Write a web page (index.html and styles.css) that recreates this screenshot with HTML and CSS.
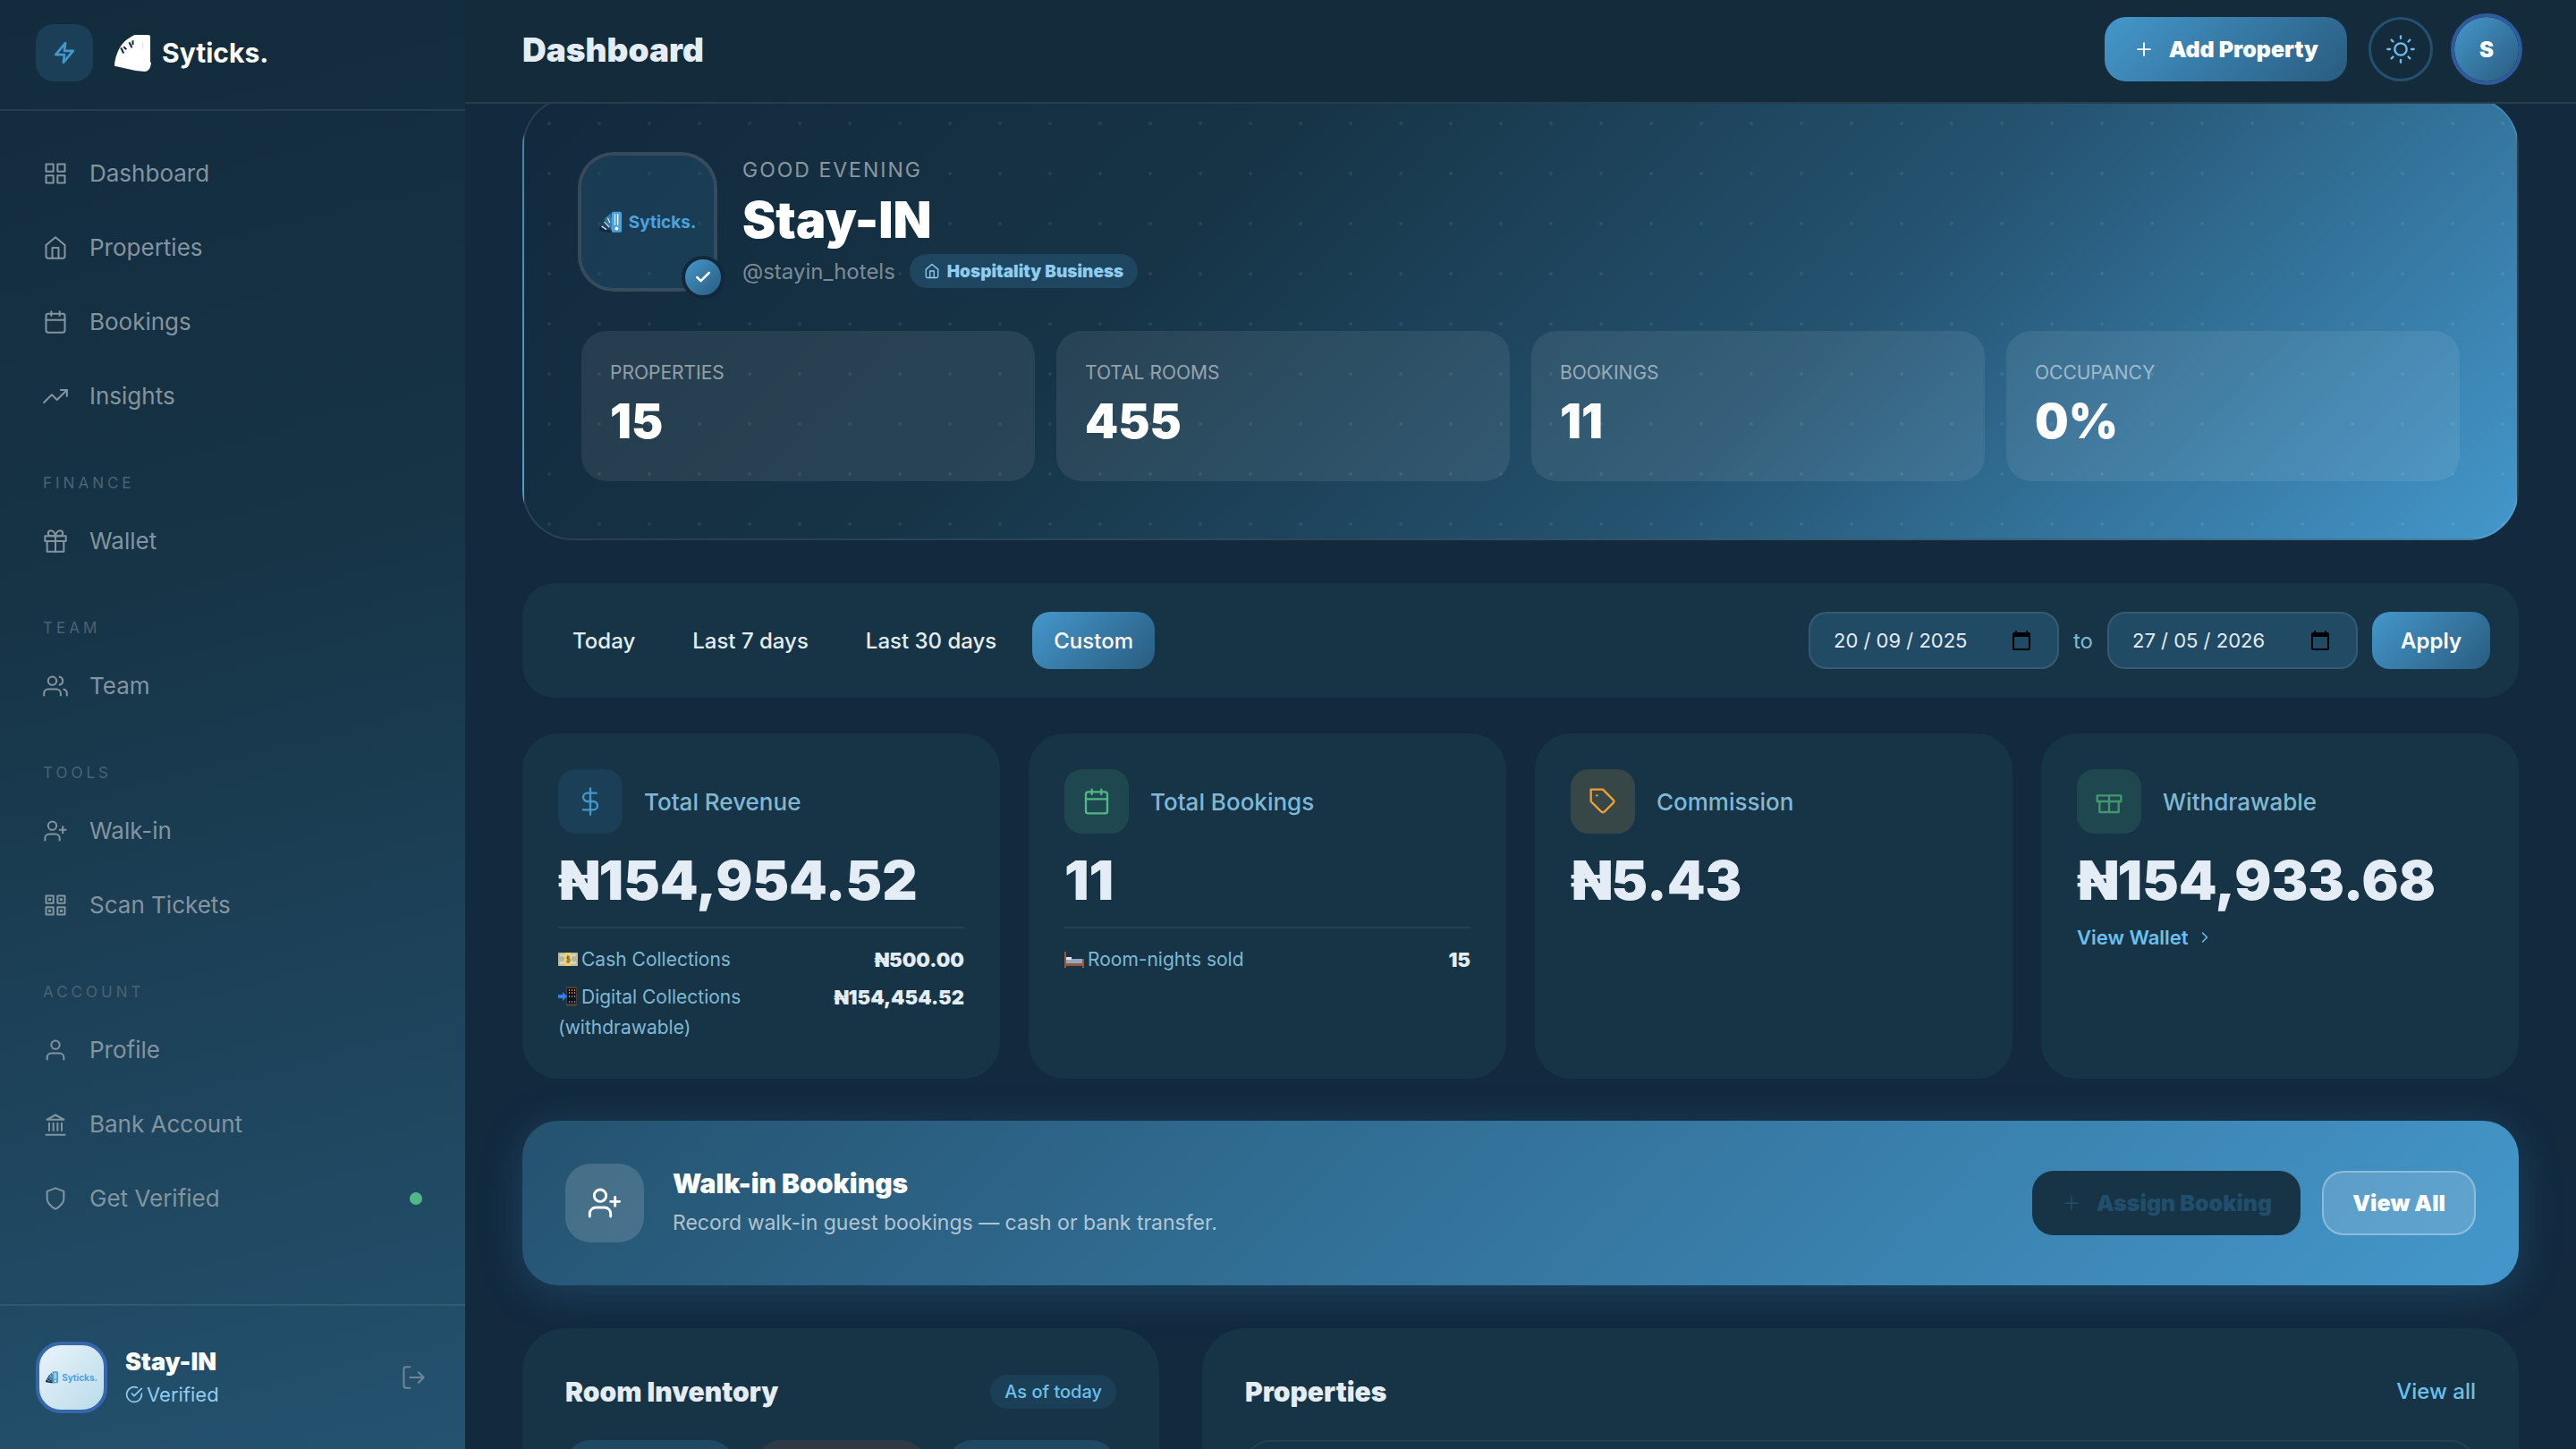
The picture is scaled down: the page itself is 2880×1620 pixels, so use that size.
FILE: index.html
```html
<!DOCTYPE html>
<html lang="en">
<head>
  <meta charset="UTF-8" />
  <meta name="viewport" content="width=device-width, initial-scale=1.0" />
  <title>Dashboard - Syticks</title>
  <link rel="stylesheet" href="styles.css">
</head>
<body>
  <!-- Shared icons -->
  <svg class="sprite" aria-hidden="true">
    <symbol id="i-zap" viewBox="0 0 24 24"><path d="M13 2 3 14h9l-1 8 10-12h-9l1-8z"/></symbol>
    <symbol id="i-grid" viewBox="0 0 24 24"><rect x="3" y="3" width="7" height="7"/><rect x="14" y="3" width="7" height="7"/><rect x="14" y="14" width="7" height="7"/><rect x="3" y="14" width="7" height="7"/></symbol>
    <symbol id="i-home" viewBox="0 0 24 24"><path d="M3 9.5 12 2l9 7.500V20a2 2 0 0 1-2 2H5a2 2 0 0 1-2-2z"/><path d="M9 22V12h6v10"/></symbol>
    <symbol id="i-calendar" viewBox="0 0 24 24"><rect x="3" y="4" width="18" height="18" rx="2"/><path d="M16 2v4M8 2v4M3 10h18"/></symbol>
    <symbol id="i-trend" viewBox="0 0 24 24"><path d="m23 6-9.500 9.500-5-5L1 18"/><path d="M17 6h6v6"/></symbol>
    <symbol id="i-gift" viewBox="0 0 24 24"><path d="M20 12v10H4V12"/><path d="M2 7h20v5H2z"/><path d="M12 22V7"/><path d="M12 7H7.500a2.500 2.500 0 0 1 0-5C11 2 12 7 12 7zM12 7h4.500a2.500 2.500 0 0 0 0-5C13 2 12 7 12 7z"/></symbol>
    <symbol id="i-box" viewBox="0 0 24 24"><path d="M20 12v9H4v-9"/><path d="M2 7h20v5H2z"/><path d="M12 21V7"/></symbol>
    <symbol id="i-users" viewBox="0 0 24 24"><path d="M17 21v-2a4 4 0 0 0-4-4H5a4 4 0 0 0-4 4v2"/><circle cx="9" cy="7" r="4"/><path d="M23 21v-2a4 4 0 0 0-3-3.870M16 3.130a4 4 0 0 1 0 7.750"/></symbol>
    <symbol id="i-user-plus" viewBox="0 0 24 24"><path d="M16 21v-2a4 4 0 0 0-4-4H6a4 4 0 0 0-4 4v2"/><circle cx="9" cy="7" r="4"/><path d="M19 8v6M22 11h-6"/></symbol>
    <symbol id="i-scan" viewBox="0 0 24 24"><rect x="3" y="3" width="7" height="7"/><rect x="14" y="3" width="7" height="7"/><rect x="14" y="14" width="7" height="7"/><rect x="3" y="14" width="7" height="7"/><path d="M6 6h1v1H6zM17 6h1v1h-1zM17 17h1v1h-1zM6 17h1v1H6z"/></symbol>
    <symbol id="i-user" viewBox="0 0 24 24"><path d="M20 21v-2a4 4 0 0 0-4-4H8a4 4 0 0 0-4 4v2"/><circle cx="12" cy="7" r="4"/></symbol>
    <symbol id="i-bank" viewBox="0 0 24 24"><path d="M3 22h18M6 18v-7M10 18v-7M14 18v-7M18 18v-7M12 3l8 4.500H4z"/></symbol>
    <symbol id="i-shield" viewBox="0 0 24 24"><path d="M12 22s8-4 8-10V5l-8-3-8 3v7c0 6 8 10 8 10z"/></symbol>
    <symbol id="i-logout" viewBox="0 0 24 24"><path d="M9 22H5a2 2 0 0 1-2-2V4a2 2 0 0 1 2-2h4"/><path d="m17 17 5-5-5-5M22 12H9"/></symbol>
    <symbol id="i-verified" viewBox="0 0 24 24"><path d="M22 11v1a10 10 0 1 1-6-9.100"/><path d="M22 4 12 14l-3-3"/></symbol>
    <symbol id="i-check" viewBox="0 0 24 24"><path d="M20 6 9 17l-5-5"/></symbol>
    <symbol id="i-plus" viewBox="0 0 24 24"><path d="M12 5v14M5 12h14"/></symbol>
    <symbol id="i-sun" viewBox="0 0 24 24"><circle cx="12" cy="12" r="5"/><path d="M12 1v2M12 21v2M4.220 4.220l1.420 1.420M18.360 18.360l1.420 1.420M1 12h2M21 12h2M4.220 19.780l1.420-1.420M18.360 5.640l1.420-1.420"/></symbol>
    <symbol id="i-dollar" viewBox="0 0 24 24"><path d="M12 1v22M17 5H9.500a3.500 3.500 0 0 0 0 7h5a3.500 3.500 0 0 1 0 7H6"/></symbol>
    <symbol id="i-tag" viewBox="0 0 24 24"><path d="m20.590 13.410-7.170 7.170a2 2 0 0 1-2.830 0L2 12V2h10l8.590 8.590a2 2 0 0 1 0 2.820z"/><path d="M7 7h.01"/></symbol>
    <symbol id="i-chevron" viewBox="0 0 24 24"><path d="m9 18 6-6-6-6"/></symbol>
    <symbol id="i-picker" viewBox="0 0 24 24"><path d="M20 3h-1V1h-2v2H7V1H5v2H4a2 2 0 0 0-2 2v16a2 2 0 0 0 2 2h16a2 2 0 0 0 2-2V5a2 2 0 0 0-2-2zm0 18H4V8h16z"/></symbol>
    <symbol id="logo-mark" viewBox="0 0 40 40">
      <path d="M0 31 4 24 20 34 28 38 17 38 1 35z" fill="#12283c"/>
      <path d="M4 25 10 14 26 32 20 35z" fill="#1d4766"/>
      <path d="M9 14 20 4 28 34 22 34z" fill="#2f78a8"/>
      <path d="m4 27 9 6M9 19l9 10M15 12l4 9" stroke="#dce9f2" stroke-width="2" fill="none"/>
      <rect x="22" y="1" width="18" height="37" rx="3" fill="#4aa3dc"/>
      <path d="M28 5v20M33 5v20" stroke="#fff" stroke-width="2" fill="none"/>
      <circle cx="31" cy="31" r="3" fill="#fff"/>
    </symbol>
  </svg>

  <div class="app">
    <aside class="sidebar">
      <div class="sidebar-head">
        <button class="zap-btn" type="button" aria-label="Quick actions"><svg class="icon"><use href="#i-zap"/></svg></button>
        <a class="brand" href="#">
          <svg class="brand-mark" viewBox="0 0 40 40" aria-hidden="true">
            <path d="M22 0h15q2 0 2 2v27l1 2-1 4q-1 4-6 5l-10-1L0 34c0-4 1-9 3-14C6 11 13 4 22 0z" fill="#fff"/>
            <path d="m7 14 3 6M10 13l3 3M16 8l3 6M20 6v5" stroke="#132b3c" stroke-width="2" fill="none"/>
            <path d="M31 8v7" stroke="#d5dde2" stroke-width="1"/>
          </svg>
          <span>Syticks.</span>
        </a>
      </div>

      <nav class="nav">
        <a href="#"><svg class="icon"><use href="#i-grid"/></svg>Dashboard</a>
        <a href="#"><svg class="icon"><use href="#i-home"/></svg>Properties</a>
        <a href="#"><svg class="icon"><use href="#i-calendar"/></svg>Bookings</a>
        <a href="#"><svg class="icon"><use href="#i-trend"/></svg>Insights</a>
        <h2>Finance</h2>
        <a href="#"><svg class="icon"><use href="#i-gift"/></svg>Wallet</a>
        <h2>Team</h2>
        <a href="#"><svg class="icon"><use href="#i-users"/></svg>Team</a>
        <h2>Tools</h2>
        <a href="#"><svg class="icon"><use href="#i-user-plus"/></svg>Walk-in</a>
        <a href="#"><svg class="icon"><use href="#i-scan"/></svg>Scan Tickets</a>
        <h2>Account</h2>
        <a href="#"><svg class="icon"><use href="#i-user"/></svg>Profile</a>
        <a href="#"><svg class="icon"><use href="#i-bank"/></svg>Bank Account</a>
        <a href="#"><svg class="icon"><use href="#i-shield"/></svg>Get Verified<span class="status-dot"></span></a>
      </nav>

      <div class="sidebar-foot">
        <div class="mini-avatar"><svg><use href="#logo-mark"/></svg><span>Syticks.</span></div>
        <div class="account">
          <strong>Stay-IN</strong>
          <span><svg class="icon"><use href="#i-verified"/></svg>Verified</span>
        </div>
        <button class="logout" type="button" aria-label="Log out"><svg class="icon"><use href="#i-logout"/></svg></button>
      </div>
    </aside>

    <div class="page">
      <header class="topbar">
        <h1>Dashboard</h1>
        <button class="btn btn-primary add-btn" type="button"><svg class="icon"><use href="#i-plus"/></svg>Add Property</button>
        <button class="theme-btn" type="button" aria-label="Toggle theme"><svg class="icon"><use href="#i-sun"/></svg></button>
        <button class="user-btn" type="button" aria-label="Account menu">S</button>
      </header>

      <main class="content">
        <section class="hero">
          <div class="hero-top">
            <div class="avatar">
              <svg class="avatar-mark"><use href="#logo-mark"/></svg><span>Syticks.</span>
              <div class="avatar-badge"><svg class="icon"><use href="#i-check"/></svg></div>
            </div>
            <div class="hero-text">
              <p class="greeting">Good evening</p>
              <h2>Stay-IN</h2>
              <div class="hero-meta">
                <span class="handle">@stayin_hotels</span>
                <span class="type-pill"><svg class="icon"><use href="#i-home"/></svg>Hospitality Business</span>
              </div>
            </div>
          </div>
          <div class="stats">
            <div class="stat"><span>Properties</span><strong>15</strong></div>
            <div class="stat"><span>Total Rooms</span><strong>455</strong></div>
            <div class="stat"><span>Bookings</span><strong>11</strong></div>
            <div class="stat"><span>Occupancy</span><strong>0%</strong></div>
          </div>
        </section>

        <section class="filters">
          <div class="ranges">
            <button type="button">Today</button>
            <button type="button">Last 7 days</button>
            <button type="button">Last 30 days</button>
            <button class="active" type="button">Custom</button>
          </div>
          <form class="dates">
            <label class="date-field"><input type="text" value="20 / 09 / 2025" aria-label="From date"><svg><use href="#i-picker"/></svg></label>
            <span>to</span>
            <label class="date-field"><input type="text" value="27 / 05 / 2026" aria-label="To date"><svg><use href="#i-picker"/></svg></label>
            <button class="apply" type="button">Apply</button>
          </form>
        </section>

        <section class="metrics">
          <article class="card metric">
            <div class="metric-head"><span class="tile blue"><svg class="icon"><use href="#i-dollar"/></svg></span><h3>Total Revenue</h3></div>
            <p class="amount">₦154,954.52</p>
            <dl class="breakdown">
              <div>
                <dt><svg class="emoji" viewBox="0 0 22 22"><rect y="4" width="22" height="15" rx="1" fill="#d9d4b8"/><path d="M1 5h20v13H1z" fill="none" stroke="#a9a58a"/><circle cx="4" cy="11" r="3" fill="#b7b49a"/><circle cx="18" cy="11" r="3" fill="#b7b49a"/><rect x="8" y="4" width="6" height="15" fill="#f3cf55"/><path d="M13 9h-3v2h3v3H9M11 7v9" fill="none" stroke="#6b5a20"/></svg>Cash Collections</dt>
                <dd>₦500.00</dd>
              </div>
              <div>
                <dt><svg class="emoji" viewBox="0 0 22 22"><rect x="9" width="12" height="22" rx="1" fill="#4a4038"/><rect x="10" y="2" width="10" height="17" fill="#16110f"/><path d="M12 4h1M15 4h1M18 4h1M12 7h1M15 7h1M18 7h1" stroke="#d88a5a" stroke-width="2"/><path d="M12 11h1M15 11h1M18 11h1M12 17h1M15 17h1M18 17h1" stroke="#5aa6d8" stroke-width="2"/><path d="M0 9h5V6l5 5-5 5v-3H0z" fill="#2f7ff0"/></svg>Digital Collections (withdrawable)</dt>
                <dd>₦154,454.52</dd>
              </div>
            </dl>
          </article>
          <article class="card metric">
            <div class="metric-head"><span class="tile green"><svg class="icon"><use href="#i-calendar"/></svg></span><h3>Total Bookings</h3></div>
            <p class="amount">11</p>
            <dl class="breakdown">
              <div>
                <dt><svg class="emoji" viewBox="0 0 22 22"><path d="M0 3h2v18H0zM20 11h2v10h-2zM2 16h18v3H2z" fill="#97593a"/><path d="M2 11h18v5H2z" fill="#8fa9c9"/><path d="M2 9h6v3H2z" fill="#dfe6ee"/></svg>Room-nights sold</dt>
                <dd>15</dd>
              </div>
            </dl>
          </article>
          <article class="card metric">
            <div class="metric-head"><span class="tile amber"><svg class="icon"><use href="#i-tag"/></svg></span><h3>Commission</h3></div>
            <p class="amount">₦5.43</p>
          </article>
          <article class="card metric">
            <div class="metric-head"><span class="tile green dim"><svg class="icon"><use href="#i-box"/></svg></span><h3>Withdrawable</h3></div>
            <p class="amount">₦154,933.68</p>
            <a class="wallet-link" href="#">View Wallet<svg class="icon"><use href="#i-chevron"/></svg></a>
          </article>
        </section>

        <section class="walkin">
          <span class="walkin-tile"><svg class="icon"><use href="#i-user-plus"/></svg></span>
          <div class="walkin-text">
            <h2>Walk-in Bookings</h2>
            <p>Record walk-in guest bookings — cash or bank transfer.</p>
          </div>
          <button class="btn btn-dark" type="button"><svg class="icon"><use href="#i-plus"/></svg>Assign Booking</button>
          <button class="btn btn-ghost" type="button">View All</button>
        </section>

        <div class="panels">
          <section class="card panel inventory">
            <div class="panel-head"><h2>Room Inventory</h2><span class="today-pill">As of today</span></div>
            <div class="rooms"><div class="room"></div><div class="room warn"></div><div class="room"></div></div>
          </section>
          <section class="card panel properties">
            <div class="panel-head"><h2>Properties</h2><a href="#">View all</a></div>
            <div class="property"></div>
          </section>
        </div>
      </main>
    </div>
  </div>
</body>
</html>
```

FILE: styles.css
```css
* {
  box-sizing: border-box;
}

body, h1, h2, h3, p, dl, dd {
  margin: 0;
}

body {
  font-family: Inter, "Noto Sans", sans-serif;
  font-size: 24px;
  color: #e4edf5;
  background-color: #12293e;
}

button, input {
  font-family: inherit;
  border: none;
  margin: 0;
  padding: 0;
  color: inherit;
}

button {
  cursor: pointer;
  background: none;
}

a {
  color: #6cc0ee;
  text-decoration: none;
}

.sprite {
  display: none;
}

.icon {
  width: 28px;
  height: 28px;
  flex: none;
  fill: none;
  stroke: currentColor;
  stroke-width: 1.75;
  stroke-linecap: round;
  stroke-linejoin: round;
}

.app {
  display: flex;
  height: 100vh;
  overflow: hidden;
}

/* Sidebar */
.sidebar {
  flex: none;
  width: 520px;
  display: flex;
  flex-direction: column;
  background: linear-gradient(165deg, #122b3d 0%, #163446 40%, #24526f 100%);
}

.sidebar-head {
  display: flex;
  align-items: center;
  gap: 24px;
  padding: 27px 40px 31px;
  border-bottom: 2px solid rgba(255, 255, 255, 0.08);
}

.zap-btn {
  display: flex;
  align-items: center;
  justify-content: center;
  width: 64px;
  height: 64px;
  border-radius: 20px;
  background-color: #1b3f57;
  color: #4497cb;
}

.zap-btn .icon {
  stroke-width: 2.5;
  width: 26px;
  height: 26px;
}

.brand {
  display: flex;
  align-items: center;
  gap: 12px;
  color: #fff;
  font-size: 30px;
  font-weight: 700;
}

.brand-mark {
  width: 41px;
  height: 41px;
}

.nav {
  flex: 1;
  padding-top: 28px;
}

.nav a {
  display: flex;
  align-items: center;
  gap: 24px;
  height: 83px;
  padding: 0 48px;
  font-size: 26px;
  color: #84949f;
}

.nav h2 {
  padding: 43px 48px 10px;
  font-size: 17px;
  line-height: 26px;
  font-weight: 400;
  letter-spacing: 4px;
  text-transform: uppercase;
  color: #4a6272;
}

.status-dot {
  width: 14px;
  height: 14px;
  margin-left: auto;
  border-radius: 50%;
  background-color: #52b788;
}

.sidebar-foot {
  display: flex;
  align-items: center;
  gap: 20px;
  padding: 40px 44px 40px 40px;
  border-top: 2px solid rgba(255, 255, 255, 0.08);
}

.mini-avatar {
  display: flex;
  align-items: center;
  justify-content: center;
  gap: 4px;
  width: 80px;
  height: 80px;
  border: 4px solid #3667ad;
  border-radius: 28px;
  background: linear-gradient(135deg, #eaf3fa, #b9dcea);
  color: #4aa3dc;
  font-size: 10px;
  font-weight: 700;
}

.mini-avatar svg {
  width: 14px;
  height: 14px;
}

.account {
  flex: 1;
}

.account strong {
  display: block;
  font-size: 27px;
  line-height: 38px;
  font-weight: 900;
  color: #fff;
}

.account span {
  display: flex;
  align-items: center;
  gap: 4px;
  font-size: 22px;
  line-height: 34px;
  color: #8ecdf0;
}

.account .icon {
  width: 20px;
  height: 20px;
  stroke-width: 2;
}

.logout {
  display: flex;
  color: #6d8799;
}

/* Top bar */
.page {
  flex: 1;
  min-width: 0;
}

.topbar {
  position: relative;
  z-index: 2;
  display: flex;
  align-items: center;
  height: 116px;
  padding: 0 60px 4px 64px;
  background-color: #132b3b;
  border-bottom: 2px solid #263e4c;
}

.topbar h1 {
  flex: 1;
  font-size: 37px;
  font-weight: 900;
}

.btn {
  display: flex;
  align-items: center;
  justify-content: center;
  gap: 16px;
  height: 72px;
  padding: 0 32px;
  border-radius: 24px;
  font-size: 25px;
  font-weight: 900;
  color: #fff;
}

.btn .icon {
  width: 24px;
  height: 24px;
}

.btn-primary, .apply, .ranges .active {
  background: linear-gradient(135deg, #4497cb, #295c80);
}

.theme-btn, .user-btn {
  display: flex;
  align-items: center;
  justify-content: center;
  border-radius: 50%;
}

.theme-btn {
  width: 72px;
  height: 72px;
  margin: 0 20px 0 24px;
  border: 3px solid #245070;
  color: #6cc0ee;
}

.theme-btn .icon {
  width: 32px;
  height: 32px;
}

.user-btn {
  width: 80px;
  height: 80px;
  border: 4px solid #2f5a9c;
  background: linear-gradient(135deg, #4497cb, #295c80) padding-box;
  font-size: 24px;
  font-weight: 900;
  color: #fff;
}

/* Hero, tucked slightly under the top bar */
.content {
  margin-top: -8px;
  padding: 0 64px;
}

.hero {
  position: relative;
  padding: 64px;
  border: 2px solid rgba(255, 255, 255, 0.1);
  border-radius: 56px;
  background:
    radial-gradient(circle, rgba(255, 255, 255, 0.08) 2px, transparent 2px) 0 0 / 56px 56px,
    linear-gradient(135deg, #12293c 0%, #163446 33%, #24526f 63%, #4497cb 100%);
}

.hero-top {
  display: flex;
  gap: 32px;
}

.avatar {
  position: relative;
  display: flex;
  align-items: center;
  justify-content: center;
  gap: 8px;
  width: 148px;
  height: 148px;
  border-radius: 36px;
  background-color: rgba(41, 98, 132, 0.3);
  box-shadow: 0 0 0 4px rgba(255, 255, 255, 0.15);
  color: #4aa3dc;
  font-size: 19px;
  font-weight: 700;
}

.avatar-mark {
  width: 25px;
  height: 25px;
}

.avatar-badge {
  position: absolute;
  right: -12px;
  bottom: -12px;
  display: flex;
  align-items: center;
  justify-content: center;
  width: 48px;
  height: 48px;
  border: 4px solid #12283a;
  border-radius: 50%;
  background: linear-gradient(135deg, #4497cb, #295c80);
  color: #fff;
}

.avatar-badge .icon {
  width: 20px;
  height: 20px;
  stroke-width: 3;
}

.greeting {
  font-size: 23px;
  line-height: 32px;
  letter-spacing: 2px;
  text-transform: uppercase;
  color: rgba(255, 255, 255, 0.5);
}

.hero-text h2 {
  margin-top: 8px;
  font-size: 56px;
  line-height: 64px;
  font-weight: 900;
  color: #fff;
}

.hero-meta {
  display: flex;
  align-items: center;
  gap: 16px;
  margin-top: 6px;
}

.handle {
  font-size: 24px;
  color: rgba(255, 255, 255, 0.45);
}

.type-pill {
  display: flex;
  align-items: center;
  gap: 8px;
  height: 38px;
  padding: 0 16px;
  border-radius: 20px;
  background-color: #1f4660;
  font-size: 19px;
  font-weight: 900;
  color: #8ecdf0;
}

.type-pill .icon {
  width: 18px;
  height: 18px;
}

.stats {
  display: grid;
  grid-template-columns: repeat(4, 1fr);
  gap: 24px;
  margin-top: 48px;
}

.stat {
  padding: 32px 32px 36px;
  border-radius: 28px;
  background-color: rgba(255, 255, 255, 0.08);
}

.stat span {
  display: block;
  font-size: 21px;
  line-height: 30px;
  text-transform: uppercase;
  color: rgba(255, 255, 255, 0.5);
}

.stat strong {
  display: block;
  margin-top: 8px;
  font-size: 53px;
  line-height: 62px;
  font-weight: 900;
  color: #fff;
}

/* Date filters */
.filters {
  display: flex;
  align-items: center;
  justify-content: space-between;
  margin-top: 48px;
  padding: 32px;
  border-radius: 36px;
  background-color: #163446;
}

.ranges, .dates {
  display: flex;
  align-items: center;
  gap: 16px;
}

.ranges button {
  height: 64px;
  padding: 0 24px;
  border-radius: 20px;
  font-size: 24px;
  font-weight: 500;
}

.ranges .active {
  color: #fff;
}

.dates {
  color: #7fb8d4;
}

.date-field {
  display: flex;
  align-items: center;
  justify-content: space-between;
  width: 280px;
  height: 64px;
  padding: 0 28px 0 26px;
  border: 2px solid #355b73;
  border-radius: 20px;
  background-color: #214a64;
}

.date-field input {
  width: 180px;
  background: none;
  font-size: 22px;
  color: #e4edf5;
}

.date-field svg {
  width: 24px;
  height: 24px;
  fill: #000;
}

.apply {
  height: 64px;
  padding: 0 32px;
  border-radius: 20px;
  font-size: 24px;
  font-weight: 600;
  color: #fff;
}

/* Metric cards */
.metrics {
  display: grid;
  grid-template-columns: repeat(4, 1fr);
  gap: 32px;
  margin-top: 40px;
}

.card {
  background-color: #163446;
}

.metric {
  padding: 40px;
  border-radius: 40px;
}

.metric-head {
  display: flex;
  align-items: center;
  gap: 24px;
}

.tile {
  display: flex;
  align-items: center;
  justify-content: center;
  width: 72px;
  height: 72px;
  border-radius: 20px;
}

.tile .icon {
  width: 32px;
  height: 32px;
}

.blue {
  color: #4497cb;
  background-color: #1b3f57;
}

.green {
  color: #52b788;
  background-color: #1f474f;
}

.dim {
  color: #43976f;
}

.amber {
  color: #f0a030;
  background-color: #374646;
}

.metric h3 {
  font-size: 26px;
  font-weight: 500;
  color: #7fb8d4;
}

.amount {
  margin-top: 12px;
  font-size: 61px;
  line-height: 80px;
  font-weight: 900;
}

.breakdown {
  margin-top: 12px;
  padding-top: 18px;
  border-top: 2px solid #264250;
  font-size: 21px;
  line-height: 34px;
}

.breakdown div {
  display: flex;
  justify-content: space-between;
  gap: 16px;
  margin-bottom: 8px;
}

.breakdown div:last-child {
  margin-bottom: 0;
}

.breakdown dt {
  max-width: 240px;
  color: #7fb8d4;
}

.breakdown dd {
  font-size: 22px;
  font-weight: 900;
}

.emoji {
  width: 22px;
  height: 22px;
  margin-right: 4px;
  vertical-align: -3px;
}

.wallet-link {
  display: inline-flex;
  align-items: center;
  gap: 8px;
  margin-top: 8px;
  font-size: 22px;
  line-height: 32px;
  font-weight: 600;
}

.wallet-link .icon {
  width: 20px;
  height: 20px;
}

/* Walk-in banner */
.walkin {
  display: flex;
  align-items: center;
  gap: 24px;
  margin-top: 47px;
  padding: 48px;
  border-radius: 40px;
  background: linear-gradient(135deg, #24526f, #4497cb);
  box-shadow: 0 8px 48px rgba(68, 151, 203, 0.25);
}

.walkin-tile {
  display: flex;
  align-items: center;
  justify-content: center;
  width: 88px;
  height: 88px;
  border-radius: 28px;
  background-color: rgba(255, 255, 255, 0.15);
  color: #fff;
}

.walkin-tile .icon {
  width: 40px;
  height: 40px;
}

.walkin-text {
  flex: 1;
  padding-left: 8px;
}

.walkin h2 {
  font-size: 30px;
  line-height: 40px;
  font-weight: 900;
  color: #fff;
}

.walkin p {
  margin-top: 4px;
  font-size: 23px;
  line-height: 40px;
  color: rgba(255, 255, 255, 0.65);
}

.btn-dark {
  background-color: #163446;
  color: #214e6b;
}

.btn-ghost {
  border: 2px solid rgba(255, 255, 255, 0.3);
  background-color: rgba(255, 255, 255, 0.15);
}

/* Bottom panels */
.panels {
  display: grid;
  grid-template-columns: repeat(12, 1fr);
  gap: 48px;
  margin-top: 48px;
}

.panel {
  position: relative;
  padding: 48px;
  border-radius: 48px;
}

.inventory {
  grid-column: span 4;
}

.properties {
  grid-column: span 8;
}

.panel-head {
  display: flex;
  align-items: center;
  justify-content: space-between;
  height: 45px;
}

.panel h2 {
  font-size: 30px;
  font-weight: 900;
}

.panel-head a {
  font-weight: 500;
}

.today-pill {
  padding: 0 16px;
  border-radius: 20px;
  background-color: #1b3f57;
  font-size: 20px;
  line-height: 38px;
  font-weight: 500;
  color: #6cc0ee;
}

.rooms {
  display: grid;
  grid-template-columns: repeat(3, 1fr);
  gap: 24px;
  margin-top: 32px;
}

.room {
  height: 160px;
  border-radius: 28px;
  background-color: #1f4963;
}

.warn {
  background-color: #2f3845;
}

.property {
  height: 160px;
  margin-top: 32px;
  border: 2px solid #24404f;
  border-radius: 28px;
}
```
